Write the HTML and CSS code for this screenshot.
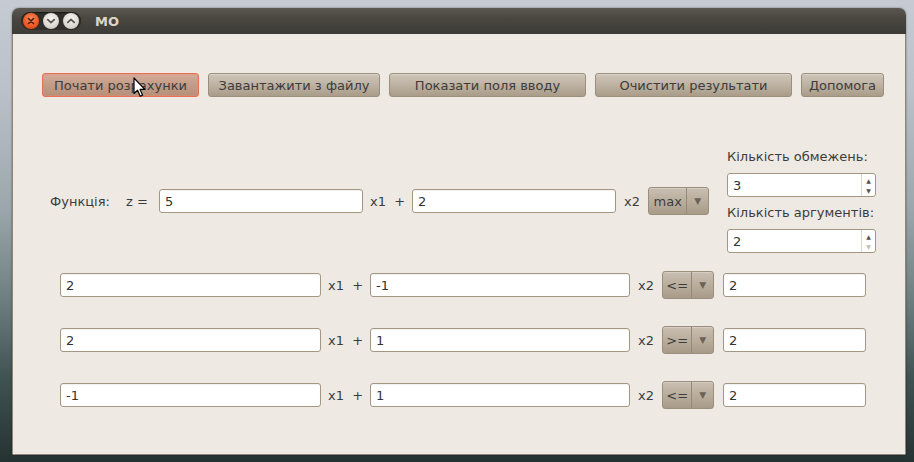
FILE: index.html
```html
<!DOCTYPE html>
<html lang="uk">
<head>
<meta charset="utf-8">
<title>MO</title>
<link rel="stylesheet" href="styles.css">
</head>
<body>
<div class="window">
  <div class="titlebar">
    <div class="wm-buttons">
      <span class="wm-btn wm-close"><svg width="16" height="16" viewBox="0 0 16 16"><path d="M5.5 5.5 L10.5 10.5 M10.5 5.5 L5.5 10.5" stroke="#4a1d0c" stroke-width="1.6" stroke-linecap="round"/></svg></span>
      <span class="wm-btn wm-grey"><svg width="16" height="16" viewBox="0 0 16 16"><path d="M4.8 6.6 L8 9.6 L11.2 6.6" fill="none" stroke="#5a5650" stroke-width="1.8" stroke-linecap="round" stroke-linejoin="round"/></svg></span>
      <span class="wm-btn wm-grey"><svg width="16" height="16" viewBox="0 0 16 16"><path d="M4.8 9.4 L8 6.4 L11.2 9.4" fill="none" stroke="#5a5650" stroke-width="1.8" stroke-linecap="round" stroke-linejoin="round"/></svg></span>
    </div>
    <div class="title">MO</div>
  </div>
  <div class="content">
    <div class="toolbar">
      <button class="btn btn-focus w1">Почати розрахунки</button>
      <button class="btn w2">Завантажити з файлу</button>
      <button class="btn w3">Показати поля вводу</button>
      <button class="btn w3">Очистити результати</button>
      <button class="btn w5">Допомога</button>
    </div>

    <div class="func-area">
      <div class="func-row">
        <span class="lbl lbl-func">Функція:</span>
        <span class="lbl lbl-z">z =</span>
        <div class="field f-func">5</div>
        <span class="lbl lbl-x1">x1&nbsp; +</span>
        <div class="field f-func">2</div>
        <span class="lbl lbl-x2">x2</span>
        <div class="combo combo-max"><span class="combo-text">max</span><span class="combo-arrow">▼</span></div>
      </div>
      <div class="side">
        <div class="side-label">Кількість обмежень:</div>
        <div class="spin"><span class="spin-text">3</span><span class="spin-btns"><span class="up">▲</span><span class="down">▼</span></span></div>
        <div class="side-label">Кількість аргументів:</div>
        <div class="spin"><span class="spin-text">2</span><span class="spin-btns"><span class="up">▲</span><span class="down disabled">▼</span></span></div>
      </div>
    </div>

    <div class="rows">
      <div class="c-row">
        <div class="field f-a">2</div>
        <span class="lbl lbl-x1">x1&nbsp; +</span>
        <div class="field f-b">-1</div>
        <span class="lbl lbl-x2">x2</span>
        <div class="combo combo-op"><span class="combo-text">&lt;=</span><span class="combo-arrow">▼</span></div>
        <div class="field f-c">2</div>
      </div>
      <div class="c-row">
        <div class="field f-a">2</div>
        <span class="lbl lbl-x1">x1&nbsp; +</span>
        <div class="field f-b">1</div>
        <span class="lbl lbl-x2">x2</span>
        <div class="combo combo-op"><span class="combo-text">&gt;=</span><span class="combo-arrow">▼</span></div>
        <div class="field f-c">2</div>
      </div>
      <div class="c-row">
        <div class="field f-a">-1</div>
        <span class="lbl lbl-x1">x1&nbsp; +</span>
        <div class="field f-b">1</div>
        <span class="lbl lbl-x2">x2</span>
        <div class="combo combo-op"><span class="combo-text">&lt;=</span><span class="combo-arrow">▼</span></div>
        <div class="field f-c">2</div>
      </div>
    </div>
  </div>
  <svg class="cursor" width="13" height="21" viewBox="0 0 13 21"><path d="M1 1 L1 16.5 L4.6 13.2 L7.2 19.3 L9.6 18.3 L7.1 12.4 L11.8 12.4 Z" fill="#fff" stroke="#000" stroke-width="1.2" stroke-linejoin="round"/></svg>
</div>
</body>
</html>
```
FILE: styles.css
```css
* { box-sizing: border-box; }
html, body { height: 100%; }
body {
  margin: 0;
  width: 914px;
  height: 462px;
  overflow: hidden;
  background: linear-gradient(180deg, #c6cbd3 0%, #bac1c8 20%, #9ba7ac 45%, #6d7e80 65%, #3f5252 82%, #253232 100%);
  font-family: "DejaVu Sans", "Noto Sans", sans-serif;
  font-size: 13px;
  color: #3c3c3c;
  padding: 8px 0 0 12px;
}
.window {
  position: relative;
  width: 894px;
  height: 447px;
  border-radius: 7px 7px 3px 3px;
  overflow: hidden;
  box-shadow: 0 0 2px rgba(0,0,0,0.5);
  display: flex;
  flex-direction: column;
}
.titlebar {
  height: 26px;
  flex: none;
  background: linear-gradient(180deg, #5a5650 0%, #4a4741 40%, #3d3b36 100%);
  display: flex;
  align-items: center;
  padding-left: 9px;
}
.wm-buttons {
  display: flex;
  gap: 4px;
  padding: 1px 2px;
  background: #302e2a;
  border-radius: 10px;
  box-shadow: inset 0 1px 1px rgba(0,0,0,0.5);
}
.wm-btn {
  width: 16px;
  height: 16px;
  border-radius: 50%;
  display: block;
}
.wm-btn svg { display: block; }
.wm-close {
  background: radial-gradient(circle at 50% 35%, #f98a5c 0%, #ee5a25 55%, #c9431a 100%);
  box-shadow: 0 0 0 1px #3a2a20;
}
.wm-grey {
  background: radial-gradient(circle at 50% 35%, #f5f3ee 0%, #dcd9d2 60%, #b7b3ab 100%);
  box-shadow: 0 0 0 1px #2d2b28;
}
.title {
  margin-left: 14px;
  font-family: "DejaVu Sans", sans-serif;
  font-weight: bold;
  font-size: 13px;
  color: #dcd6ca;
}
.content {
  flex: 1;
  background: #eeeae3;
  border-left: 1px solid #8f8577;
  border-right: 1px solid #8f8577;
  border-bottom: 1px solid #8f8577;
  padding: 39px 0 0 29px;
}
.toolbar {
  display: flex;
  gap: 9px;
  height: 24px;
}
.btn {
  font-family: inherit;
  font-size: 13px;
  color: #3c3c3c;
  height: 24px;
  padding: 0;
  border: 1px solid #9b8e7c;
  border-radius: 3px;
  background: linear-gradient(180deg, #cfc6b9 0%, #bdb2a2 50%, #a99c89 100%);
  box-shadow: inset 0 1px 0 rgba(255,255,255,0.25);
  white-space: nowrap;
}
.btn-focus {
  border: 1px solid #ea6e55;
  background: linear-gradient(180deg, #d3ab98 0%, #c39c87 50%, #b59079 100%);
  box-shadow: inset 0 0 0 1px rgba(240,140,110,0.35);
}
.w1 { width: 157px; }
.w2 { width: 172px; }
.w3 { width: 197px; }
.w5 { width: 83px; }

.func-area {
  display: flex;
  align-items: center;
  margin-top: 52px;
}
.func-row {
  display: flex;
  align-items: center;
  padding-left: 8px;
  width: 685px;
}
.lbl { white-space: nowrap; }
.lbl-func { width: 76px; }
.lbl-z { width: 33px; }
.lbl-x1 { width: 49px; text-align: center; }
.lbl-x2 { width: 32px; text-align: center; }

.field {
  height: 24px;
  background: #fff;
  border: 1px solid #a39782;
  border-radius: 3px;
  padding: 0 5px;
  display: flex;
  align-items: center;
  font-size: 13px;
  color: #333;
  box-shadow: inset 0 1px 1px rgba(0,0,0,0.06);
}
.f-func { width: 204px; }
.f-a { width: 261px; }
.f-b { width: 260px; }
.f-c { width: 143px; margin-left: 9px; }

.combo {
  height: 28px;
  display: flex;
  border: 1px solid #9b8e7c;
  border-radius: 3px;
  background: linear-gradient(180deg, #c9bfb1 0%, #b9ad9c 50%, #a89b88 100%);
  font-size: 13px;
  color: #3c3c3c;
  box-shadow: inset 0 1px 0 rgba(255,255,255,0.25);
}
.combo-text {
  display: flex;
  align-items: center;
  justify-content: center;
  border-right: 1px solid #958874;
}
.combo-arrow {
  width: 21px;
  display: flex;
  align-items: center;
  justify-content: center;
  font-size: 9px;
  color: #6a6258;
}
.combo-max { width: 61px; }
.combo-max .combo-text { width: 39px; }
.combo-op { width: 52px; }
.combo-op .combo-text { width: 30px; }

.side {
  display: flex;
  flex-direction: column;
  gap: 8px;
  width: 149px;
}
.side-label {
  height: 16px;
  line-height: 16px;
  white-space: nowrap;
  color: #3c3c3c;
}
.spin {
  height: 24px;
  background: #fff;
  border: 1px solid #a39782;
  border-radius: 3px;
  display: flex;
  font-size: 13px;
  color: #333;
}
.spin-text {
  flex: 1;
  display: flex;
  align-items: center;
  padding-left: 5px;
}
.spin-btns {
  width: 14px;
  border-left: 1px solid #ddd7cc;
  display: flex;
  flex-direction: column;
  align-items: center;
  justify-content: space-between;
  padding: 3px 0 2px;
  font-size: 6px;
  line-height: 7px;
  color: #5a5248;
}
.spin-btns .disabled { color: #c4bdb2; }

.rows {
  margin-top: 18px;
  display: flex;
  flex-direction: column;
  gap: 27px;
  padding-left: 18px;
}
.c-row {
  display: flex;
  align-items: center;
  height: 28px;
}

.cursor {
  position: absolute;
  left: 121px;
  top: 69px;
}
```
